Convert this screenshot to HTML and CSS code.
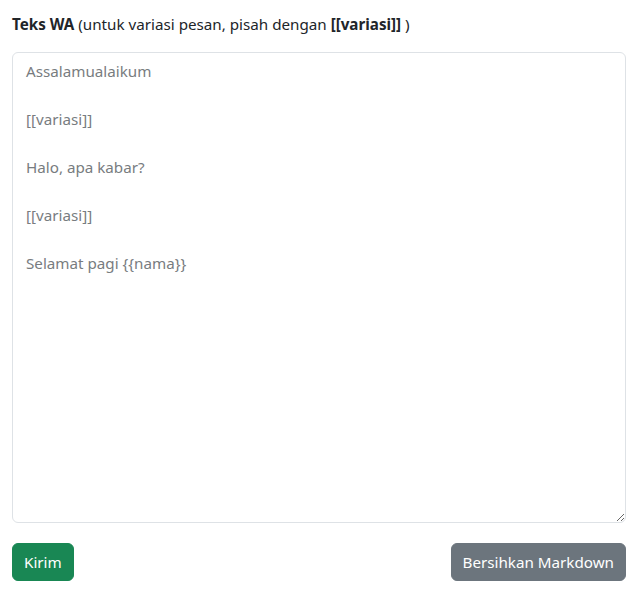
FILE: index.html
```html
<!DOCTYPE html>
<html lang="id">
<head>
<meta charset="utf-8">
<title>Teks WA</title>
<link rel="stylesheet" href="styles.css">
</head>
<body>
<form class="form">
  <label class="form-label" for="teks"><strong>Teks WA</strong> (untuk variasi pesan, pisah dengan <strong>[[variasi]]</strong> )</label>
  <textarea id="teks" class="form-control" placeholder="Assalamualaikum

[[variasi]]

Halo, apa kabar?

[[variasi]]

Selamat pagi {{nama}}"></textarea>
  <div class="actions">
    <button type="button" class="btn btn-success">Kirim</button>
    <button type="button" class="btn btn-secondary">Bersihkan Markdown</button>
  </div>
</form>
</body>
</html>
```
FILE: styles.css
```css
* { box-sizing: border-box; }
html, body { margin: 0; padding: 0; background: #fff; }
body {
  font-family: "Noto Sans", "Open Sans", sans-serif;
  font-size: 15.2px;
  line-height: 24px;
  color: #212529;
}
.form {
  display: flex;
  flex-direction: column;
  padding: 12px 14px 0 12px;
}
.form-label {
  display: block;
  margin-bottom: 16px;
}
.form-label strong { font-weight: 700; }
.form-control {
  display: block;
  width: 100%;
  height: 471px;
  padding: 6px 13px;
  font-family: inherit;
  font-size: 15.2px;
  line-height: 24px;
  color: #212529;
  background: #fff;
  border: 1px solid #dee2e6;
  border-radius: 6px;
  resize: vertical;
  outline: none;
}
.form-control::placeholder { color: #787c80; opacity: 1; }
.actions {
  display: flex;
  justify-content: space-between;
  margin-top: 20px;
}
.btn {
  font-family: inherit;
  font-size: 15.2px;
  line-height: 24px;
  padding: 6px 11px;
  border: 1px solid transparent;
  border-radius: 6px;
  color: #fff;
  cursor: pointer;
}
.btn-success { background: #198754; border-color: #198754; }
.btn-secondary { background: #6c757d; border-color: #6c757d; }
```
